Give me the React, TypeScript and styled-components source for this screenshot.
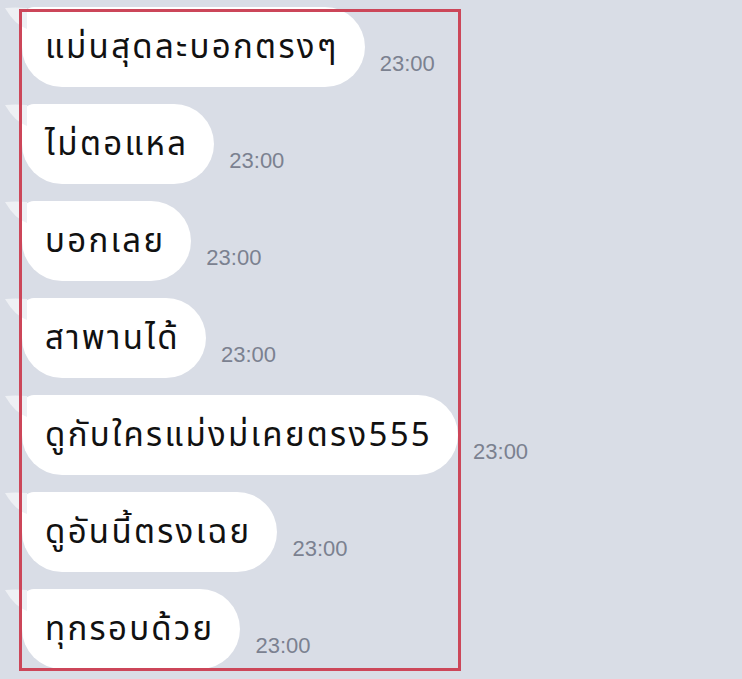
import React from 'react';
import styled, { createGlobalStyle } from 'styled-components';

const GlobalStyle = createGlobalStyle`
  html, body {
    margin: 0;
    padding: 0;
    background: #d9dde6;
  }
  * {
    box-sizing: border-box;
  }
`;

const messages = [
  'แม่นสุดละบอกตรงๆ',
  'ไม่ตอแหล',
  'บอกเลย',
  'สาพานได้',
  'ดูกับใครแม่งม่เคยตรง555',
  'ดูอันนี้ตรงเฉย',
  'ทุกรอบด้วย',
];

const App: React.FC = () => {
  return (
    <>
      <GlobalStyle />
      <Screen>
        <ChatList>
          {messages.map((text, i) => (
            <Row key={i}>
              <Bubble>
                <Tail viewBox="0 0 22 24" aria-hidden>
                  <path d="M0 1 Q10 0 22 1 L22 22 Q10 18 0 1 Z" />
                </Tail>
                {text}
              </Bubble>
              <Time>23:00</Time>
            </Row>
          ))}
        </ChatList>
        <Highlight />
      </Screen>
    </>
  );
};

export default App;

const Screen = styled.div`
  position: relative;
  width: 742px;
  height: 679px;
  overflow: hidden;
  background: #d9dde6;
`;

const ChatList = styled.div`
  display: flex;
  flex-direction: column;
  gap: 17px;
  padding: 7px 0 0 22px;
`;

const Row = styled.div`
  display: flex;
  align-items: flex-end;
  gap: 15px;
`;

const Bubble = styled.div`
  position: relative;
  height: 80px;
  display: flex;
  align-items: center;
  padding: 2px 26px 0 23px;
  background: #ffffff;
  border-radius: 12px 40px 40px 40px;
  font-family: 'Noto Sans Thai', 'Noto Sans', 'DejaVu Sans', sans-serif;
  font-size: 33px;
  letter-spacing: 2.3px;
  color: #111111;
  white-space: nowrap;
`;

const Tail = styled.svg`
  position: absolute;
  left: -17px;
  top: 0;
  width: 22px;
  height: 24px;
  fill: #eef0f4;
`;

const Time = styled.span`
  margin-bottom: 12px;
  font-family: 'Liberation Sans', Arial, sans-serif;
  font-size: 22px;
  line-height: 22px;
  color: #7b8190;
`;

const Highlight = styled.div`
  position: absolute;
  left: 19px;
  top: 9px;
  width: 442px;
  height: 662px;
  border: 3px solid #cc4659;
  pointer-events: none;
`;
